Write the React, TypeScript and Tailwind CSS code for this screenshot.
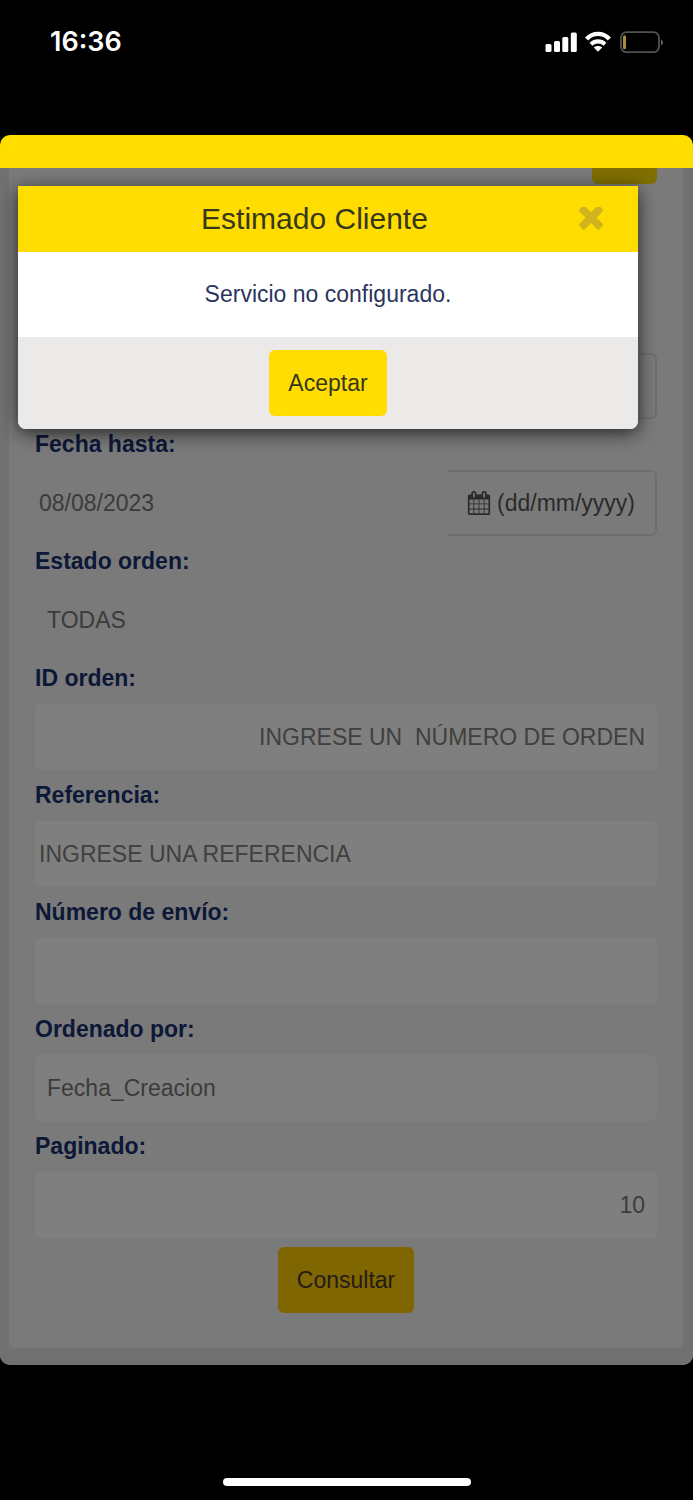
import React, { useState } from 'react';

const fieldClass = 'block h-[66px] w-full appearance-none rounded-md text-[23px] outline-none';

function StatusBar() {
    return (
        <header className="flex h-[135px] items-start justify-between pt-[26px] pr-[29px] pl-[50px]">
            <time className="font-['Inter',sans-serif] text-[27px] leading-8 font-semibold text-white">16:36</time>
            <div className="flex items-center gap-2 pt-1">
                <svg className="h-6 w-8" viewBox="0 0 32 24" fill="#fff" aria-hidden="true">
                    <rect x="0.5" y="14" width="6" height="8" rx="1.5" />
                    <rect x="9" y="11" width="6" height="11" rx="1.5" />
                    <rect x="17.3" y="7" width="6" height="15" rx="1.5" />
                    <rect x="25.8" y="2.5" width="6" height="19.5" rx="1.5" />
                </svg>
                <svg className="h-6 w-[26px]" viewBox="0 0 26 24" fill="none" stroke="#fff" aria-hidden="true">
                    <path d="M1.6 9C8 2.2 18 2.2 24.4 9" strokeWidth="4.4" />
                    <path d="M6 14.2C10 10.4 16 10.4 20 14.2" strokeWidth="4.2" />
                    <path d="M13 21.8L8.8 17.6C11.2 15.6 14.8 15.6 17.2 17.6Z" fill="#fff" stroke="none" />
                </svg>
                <svg className="h-6 w-[45px]" viewBox="0 0 45 24" fill="none" aria-hidden="true">
                    <rect x="2" y="2.2" width="38" height="20" rx="5.5" stroke="#525252" strokeWidth="1.8" />
                    <rect x="4" y="5.2" width="3" height="14" rx="1.5" fill="#a88d3c" />
                    <path d="M42 9.5C44.6 10.5 44.6 14.5 42 15.5Z" fill="#626262" />
                </svg>
            </div>
        </header>
    );
}

function CalendarIcon() {
    return (
        <svg className="size-6" viewBox="0 0 1792 1792" fill="currentColor" aria-hidden="true">
            <path d="M192 1664h288v-288h-288v288zm352 0h320v-288h-320v288zm-352-352h288v-320h-288v320zm352 0h320v-320h-320v320zm-352-384h288v-288h-288v288zm736 736h320v-288h-320v288zm-384-736h320v-288h-320v288zm768 736h288v-288h-288v288zm-384-352h320v-320h-320v320zm-352-864v-288q0-13-9.5-22.5t-22.5-9.5h-64q-13 0-22.5 9.5t-9.5 22.5v288q0 13 9.5 22.5t22.5 9.5h64q13 0 22.5-9.5t9.5-22.5zm736 864h288v-320h-288v320zm-384-384h320v-288h-320v288zm384 0h288v-288h-288v288zm32-480v-288q0-13-9.5-22.5t-22.5-9.5h-64q-13 0-22.5 9.5t-9.5 22.5v288q0 13 9.5 22.5t22.5 9.5h64q13 0 22.5-9.5t9.5-22.5zm384-64v1280q0 52-38 90t-90 38h-1408q-52 0-90-38t-38-90v-1280q0-52 38-90t90-38h128v-96q0-66 47-113t113-47h64q66 0 113 47t47 113v96h384v-96q0-66 47-113t113-47h64q66 0 113 47t47 113v96h128q52 0 90 38t38 90z" />
        </svg>
    );
}

function Field({ id, label, children }: { id: string; label: string; children: React.ReactNode }) {
    return (
        <div>
            <label htmlFor={id} className="block text-[23px] leading-[51px] font-bold text-[#18306e]">
                {label}
            </label>
            {children}
        </div>
    );
}

function OrdersForm() {
    const [paginado, setPaginado] = useState('10');

    return (
        <form className="rounded-b-md bg-[#f5f5f5] px-[26px] pb-[35px]" onSubmit={(e) => e.preventDefault()}>
            <div className="ml-auto h-4 w-[65px] rounded-b-md bg-[#ffdd00]" />
            <div className="mt-[169px] ml-auto h-[66px] w-1/3 rounded-r-md border-2 border-l-0 border-[#dcdcdc]" />

            <Field id="hasta" label="Fecha hasta:">
                <div className="flex">
                    <input id="hasta" className="h-[66px] min-w-0 flex-1 pl-1 text-[23px] text-[#777] outline-none" defaultValue="08/08/2023" />
                    <span className="flex h-[66px] items-center gap-1.5 rounded-r-md border-2 border-l-0 border-[#dcdcdc] px-5 text-[23px] text-[#555]">
                        <CalendarIcon />
                        (dd/mm/yyyy)
                    </span>
                </div>
            </Field>
            <Field id="estado" label="Estado orden:">
                <select id="estado" className={`${fieldClass} pl-3 text-[#777]`}>
                    <option>TODAS</option>
                </select>
            </Field>
            <Field id="orden" label="ID orden:">
                <input id="orden" className={`${fieldClass} bg-white pr-3 text-right placeholder:text-[#808080]`} placeholder="INGRESE UN  NÚMERO DE ORDEN" />
            </Field>
            <Field id="referencia" label="Referencia:">
                <input id="referencia" className={`${fieldClass} bg-white pl-1 placeholder:text-[#808080]`} placeholder="INGRESE UNA REFERENCIA" />
            </Field>
            <Field id="envio" label="Número de envío:">
                <input id="envio" className={`${fieldClass} bg-white pl-1`} />
            </Field>
            <Field id="ordenado" label="Ordenado por:">
                <select id="ordenado" className={`${fieldClass} bg-white pl-3 text-[#777]`}>
                    <option>Fecha_Creacion</option>
                </select>
            </Field>
            <Field id="paginado" label="Paginado:">
                <input
                    id="paginado"
                    className={`${fieldClass} bg-white pr-3 text-right text-[#777]`}
                    value={paginado}
                    onChange={(e) => setPaginado(e.target.value)}
                />
            </Field>

            <button type="submit" className="mx-auto mt-[9px] block h-[66px] rounded-md bg-[#ffcc00] px-[19px] text-[23px] text-[#4a3a30]">
                Consultar
            </button>
        </form>
    );
}

function AlertModal({ onClose }: { onClose: () => void }) {
    return (
        <div className="absolute inset-0 bg-black/50 pt-[18px] pr-[55px] pl-[18px]">
            <div role="dialog" aria-labelledby="alert-title" className="overflow-hidden rounded-b-lg bg-white text-center shadow-[0_4px_18px_rgba(0,0,0,0.7)]">
                <div className="flex h-[66px] items-center bg-[#ffdd00] pr-[35px] pl-8">
                    <h2 id="alert-title" className="flex-1 text-3xl text-[#36371f]">Estimado Cliente</h2>
                    <button type="button" aria-label="Cerrar" onClick={onClose}>
                        <svg className="size-6" viewBox="302 434 1188 1188" fill="#d2b41c" aria-hidden="true">
                            <path d="M1490 1322q0 40-28 68l-136 136q-28 28-68 28t-68-28l-294-294-294 294q-28 28-68 28t-68-28l-136-136q-28-28-28-68t28-68l294-294-294-294q-28-28-28-68t28-68l136-136q28-28 68-28t68 28l294 294 294-294q28-28 68-28t68 28l136 136q28 28 28 68t-28 68l-294 294 294 294q28 28 28 68z" />
                        </svg>
                    </button>
                </div>
                <p className="text-[23px] leading-[85px] text-[#2b3560]">Servicio no configurado.</p>
                <div className="bg-[#ebeae8] py-[13px]">
                    <button type="button" onClick={onClose} className="h-[66px] rounded-md bg-[#ffdd00] px-[19px] text-[23px] text-[#36371f]">
                        Aceptar
                    </button>
                </div>
            </div>
        </div>
    );
}

export default function App() {
    const [isOpen, setIsOpen] = useState(true);

    return (
        <div className="flex min-h-screen flex-col bg-black font-['Liberation_Sans',Arial,sans-serif]">
            <StatusBar />
            <main className="overflow-hidden rounded-[10px]">
                <div className="h-[33px] bg-[#ffdd00]" />
                <div className="relative bg-[#e2e2e2] pr-[10px] pb-[17px] pl-[9px]">
                    <OrdersForm />
                    {isOpen && <AlertModal onClose={() => setIsOpen(false)} />}
                </div>
            </main>
            <div className="mx-auto mt-auto mb-[14px] h-2 w-[248px] rounded-full bg-white" />
        </div>
    );
}
